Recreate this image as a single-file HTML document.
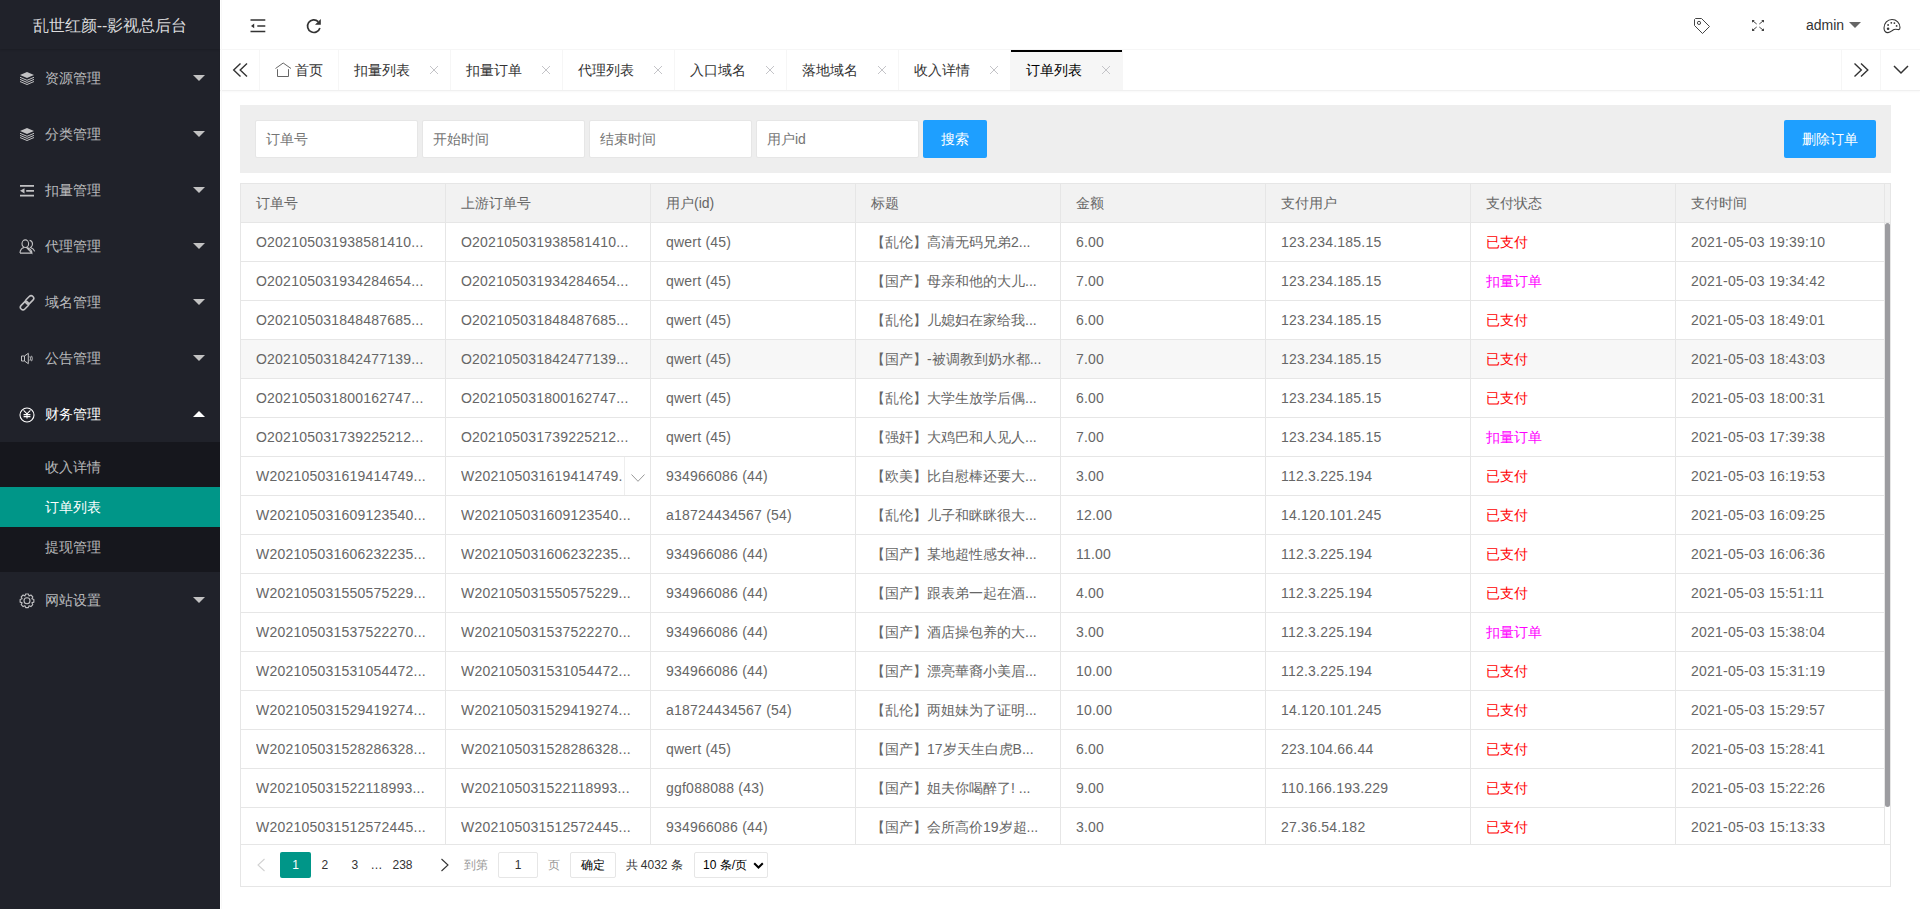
<!DOCTYPE html>
<html><head><meta charset="utf-8">
<style>
*{margin:0;padding:0;box-sizing:border-box}
html,body{width:1920px;height:909px;overflow:hidden;background:#fff}
body{font-family:"Liberation Sans",sans-serif;font-size:14px;color:#666;position:relative}
.side{position:absolute;left:0;top:0;width:220px;height:909px;background:#20222a}
.logo{position:absolute;left:0;top:0;width:220px;height:49px;line-height:52px;text-align:center;color:rgba(255,255,255,.85);font-size:16px;box-shadow:0 1px 2px 0 rgba(0,0,0,.15)}
.nav{position:absolute;left:0;top:50px;width:220px}
.item{position:relative;height:56px;line-height:56px;color:rgba(255,255,255,.7);padding-left:45px}
.item.on{color:#fff}
.item svg.ic{position:absolute;left:19px;top:20px}
.item .tri{position:absolute;right:15px;top:25px;width:0;height:0;border-left:6px solid transparent;border-right:6px solid transparent;border-top:6px solid #c2c2c2}
.item.on .tri{top:25px;border-top:0;border-bottom:6px solid #fff}
.child{background:rgba(0,0,0,.3);padding:5px 0}
.child div{height:40px;line-height:40px;padding-left:45px;color:rgba(255,255,255,.7)}
.child div.act{background:#009688;color:#fff}
.header{position:absolute;left:220px;top:0;right:0;height:50px;background:#fff;border-bottom:1px solid #f6f6f6}
.ab{position:absolute}
.tabs{position:absolute;left:220px;top:50px;right:0;height:41px;background:#fff;border-bottom:1px solid #f0f0f0;box-shadow:0 1px 2px 0 rgba(0,0,0,.03)}
.tabs .ctl{position:absolute;top:0;width:40px;height:40px;border-left:1px solid #f6f6f6;border-right:1px solid #f6f6f6}
.tabul{position:absolute;left:40px;top:0;height:40px;white-space:nowrap;font-size:0}
.tab{display:inline-block;position:relative;height:40px;line-height:40px;font-size:14px;color:#333;padding:0 40px 0 15px;border-right:1px solid #f6f6f6;vertical-align:top}
.tab .x{position:absolute;right:11px;top:15px}
.tab.act{background:#f6f6f6;color:#000}
.tab.act:after{content:"";position:absolute;left:0;top:0;width:100%;height:2px;background:#000}
.search{position:absolute;left:240px;top:105px;width:1651px;height:68px;background:#eee}
.inp{position:absolute;top:15px;width:163px;height:38px;background:#fff;border:1px solid #e6e6e6;border-radius:2px;line-height:36px;padding-left:10px;color:#757575}
.btn{position:absolute;height:38px;line-height:38px;background:#1e9fff;color:#fff;text-align:center;border-radius:2px}
.tbl{position:absolute;left:240px;top:183px;width:1651px;height:704px;border:1px solid #e6e6e6}
.tr{display:flex;height:39px;border-bottom:1px solid #e6e6e6;width:1644px}
.th{background:#f2f2f2}
.td{width:205px;flex:none;border-right:1px solid #e6e6e6;padding:0 15px;line-height:38px;white-space:nowrap;overflow:hidden;color:#666;letter-spacing:.22px}
.td:nth-child(4),.td:nth-child(7),.th .td{letter-spacing:0}
.td:nth-child(8){width:209px}

.cell{overflow:hidden;white-space:nowrap}
.tr.hov{background:#f7f7f7}
.red{color:red}.mag{color:#f0f}
.exp{position:relative}
.tips{position:absolute;right:0;top:0;width:26px;height:38px;border-left:1px solid #eee;background:#fff}
.tips svg{position:absolute;left:5px;top:16px}
.patch{position:absolute;left:1644px;top:0;width:5px;height:39px;background:#f2f2f2;border-bottom:1px solid #e6e6e6}
.thumb{position:absolute;left:1644px;top:39px;width:5px;height:584px;background:#9c9ca0;border-radius:3px}
.page{position:absolute;left:0;top:660px;width:1649px;height:42px;background:#fff;border-top:1px solid #e6e6e6}
.pg{position:absolute;top:852px;height:26px;line-height:26px;font-size:12px;color:#333;white-space:nowrap}
</style></head><body>
<div class="side">
 <div class="logo">乱世红颜--影视总后台</div>
 <div class="nav">
  <div class="item"><svg class="ic" width="16" height="16" viewBox="0 0 16 16"><path d="M1 5 L8 2 L15 5 L8 8 Z" fill="#c2c2c4"/><path d="M1 7.3 L8 10.3 L15 7.3 M1 9.4 L8 12.4 L15 9.4 M1 11.5 L8 14.5 L15 11.5" fill="none" stroke="#c2c2c4" stroke-width="1"/></svg>资源管理<i class="tri"></i></div>
  <div class="item"><svg class="ic" width="16" height="16" viewBox="0 0 16 16"><path d="M1 5 L8 2 L15 5 L8 8 Z" fill="#c2c2c4"/><path d="M1 7.3 L8 10.3 L15 7.3 M1 9.4 L8 12.4 L15 9.4 M1 11.5 L8 14.5 L15 11.5" fill="none" stroke="#c2c2c4" stroke-width="1"/></svg>分类管理<i class="tri"></i></div>
  <div class="item"><svg class="ic" width="16" height="16" viewBox="0 0 16 16"><path d="M1 3.9 H15 M7.2 8.8 H15 M1 13.7 H15" stroke="#c2c2c4" stroke-width="1.8" fill="none"/><path d="M1 8.8 L5.5 6.2 V11.4 Z" fill="#c2c2c4"/></svg>扣量管理<i class="tri"></i></div>
  <div class="item"><svg class="ic" width="17" height="17" viewBox="0 0 17 17"><ellipse cx="6.3" cy="5.7" rx="3.3" ry="3.8" fill="none" stroke="#c2c2c4" stroke-width="1.1"/><path d="M1 15.1 C1 11.8 3.2 9.7 5 9.6 M7.6 9.6 C9.6 9.7 12.9 11.8 12.9 15.1 Z M1 15.1 H12.9" fill="none" stroke="#c2c2c4" stroke-width="1.1"/><path d="M10.6 2.3 C12.4 2.8 13.5 4.3 13.5 6 C13.5 7.5 12.8 8.7 11.6 9.5 C13.6 10.3 15.2 11.8 15.7 13.3" fill="none" stroke="#c2c2c4" stroke-width="1.1"/></svg>代理管理<i class="tri"></i></div>
  <div class="item"><svg class="ic" width="17" height="17" viewBox="0 0 17 17"><rect x="-2.6" y="-4.7" width="5.2" height="9.4" rx="2.6" transform="translate(10.6 5.8) rotate(45)" fill="none" stroke="#c2c2c4" stroke-width="1.6"/><rect x="-2.6" y="-4.7" width="5.2" height="9.4" rx="2.6" transform="translate(5.5 11.7) rotate(45)" fill="none" stroke="#c2c2c4" stroke-width="1.6"/></svg>域名管理<i class="tri"></i></div>
  <div class="item"><svg class="ic" width="17" height="17" viewBox="0 0 17 17"><path d="M2.5 6 H5.5 L9.3 3.3 V13.7 L5.5 11 H2.5 Z M5.5 6 V11" fill="none" stroke="#c2c2c4" stroke-width="1"/><path d="M11 6.3 Q12 8.5 11 10.7 M12.6 5.8 Q14 8.5 12.6 11.2" fill="none" stroke="#c2c2c4" stroke-width="1"/></svg>公告管理<i class="tri"></i></div>
  <div class="item on"><svg class="ic" width="17" height="17" viewBox="0 0 17 17"><circle cx="8" cy="9" r="7" fill="none" stroke="#fff" stroke-width="1.1"/><path d="M4.6 4.3 L8 7.8 L11.4 4.3 M4.6 8.6 H11.4 M4.6 10.6 H11.4 M8 7.8 V12.6" fill="none" stroke="#fff" stroke-width="1.1"/></svg>财务管理<i class="tri"></i></div>
  <div class="child">
   <div>收入详情</div>
   <div class="act">订单列表</div>
   <div>提现管理</div>
  </div>
  <div class="item"><svg class="ic" width="17" height="17" viewBox="0 0 17 17"><path d="M5.98 3.90 L6.66 1.93 L9.34 1.93 L10.02 3.90 L10.04 3.91 L11.91 3.00 L13.80 4.89 L12.89 6.76 L12.90 6.78 L14.87 7.46 L14.87 10.14 L12.90 10.82 L12.89 10.84 L13.80 12.71 L11.91 14.60 L10.04 13.69 L10.02 13.70 L9.34 15.67 L6.66 15.67 L5.98 13.70 L5.96 13.69 L4.09 14.60 L2.20 12.71 L3.11 10.84 L3.10 10.82 L1.13 10.14 L1.13 7.46 L3.10 6.78 L3.11 6.76 L2.20 4.89 L4.09 3.00 L5.96 3.91 Z" fill="none" stroke="#c2c2c4" stroke-width="1.1" stroke-linejoin="round"/><circle cx="8" cy="8.8" r="3" fill="none" stroke="#c2c2c4" stroke-width="1.1"/></svg>网站设置<i class="tri"></i></div>
 </div>
</div>

<div class="header"></div>
<div class="ab" style="left:221px;top:0;width:1px;height:909px;background:#f8f8f8;z-index:5"></div>
<svg class="ab" style="left:250px;top:18px" width="16" height="16" viewBox="0 0 16 16"><path d="M0.5 2.1 H15.3 M7.3 7.9 H15.3 M0.5 13.6 H15.3" stroke="#333" stroke-width="1.5" fill="none"/><path d="M1 7.9 L4.2 5.6 V10.2 Z" fill="#333"/></svg>
<svg class="ab" style="left:305px;top:17px" width="18" height="18" viewBox="0 0 18 18"><path d="M13.2 4.6 A6.3 6.3 0 1 0 14.9 10.9" fill="none" stroke="#333" stroke-width="1.7"/><path d="M15.8 2 V7.8 H10 Z" fill="#333"/></svg>
<svg class="ab" style="left:1690px;top:15px" width="22" height="22" viewBox="0 0 22 22"><path d="M5.5 3.5 H11.5 L19.5 11.5 L12.5 18.5 L4.5 10.5 V4.5 Z" fill="none" stroke="#444" stroke-width="1" stroke-linejoin="round"/><circle cx="9" cy="7.9" r="1.6" fill="none" stroke="#444" stroke-width="1"/></svg>
<svg class="ab" style="left:1750px;top:18px" width="16" height="16" viewBox="0 0 16 16"><path d="M2 2 H4.8 L2 4.8 Z M14 2 V4.8 L11.2 2 Z M2 13 V10.2 L4.8 13 Z M14 13 H11.2 L14 10.2 Z" fill="#444"/><path d="M3 3 L6.7 6 M13 3 L9.3 6 M3 12 L6.7 9 M13 12 L9.3 9" stroke="#444" stroke-width="1" fill="none"/></svg>
<div class="ab" style="left:1806px;top:0;line-height:50px;color:#333;font-size:14px">admin</div>
<i class="ab" style="left:1849px;top:22px;width:0;height:0;border-left:6px solid transparent;border-right:6px solid transparent;border-top:6px solid #666"></i>
<svg class="ab" style="left:1882px;top:17px" width="20" height="18" viewBox="0 0 20 18"><path d="M6 15.6 C3.5 15.8 2 13.5 2 11 C2 6 5.5 2.5 10 2.5 C14.5 2.5 18 6 18 10.5 C18 12 17.5 12.6 16.5 12.6 C14 12.2 12.5 11.8 11 13 C9 14.5 8.5 15.5 6 15.6 Z" fill="none" stroke="#333" stroke-width="1.1"/><circle cx="6.1" cy="8" r="0.9" fill="#333"/><circle cx="9.3" cy="5.8" r="0.9" fill="#333"/><circle cx="12.4" cy="6.1" r="0.9" fill="#333"/><circle cx="14.6" cy="8.9" r="0.9" fill="#333"/><circle cx="6.1" cy="11.75" r="1.3" fill="#333"/></svg>

<div class="tabs">
 <div class="ctl" style="left:0;border-left:0"><svg style="position:absolute;left:0;top:0" width="40" height="40" viewBox="0 0 40 40"><path d="M20.5 13.5 L13.7 20 L20.5 26.5 M27 13.5 L20.2 20 L27 26.5" fill="none" stroke="#333" stroke-width="1.4"/></svg></div>
 <div class="tabul">
  <div class="tab" style="width:79px;padding:0 0 0 35px"><svg style="position:absolute;left:15px;top:12px" width="17" height="16" viewBox="0 0 17 16"><path d="M0.5 6.5 L8.2 1 L16 6.5 M2.5 7.2 V14.5 H13.5 V7.2" fill="none" stroke="#666" stroke-width="1"/></svg>首页</div><div class="tab">扣量列表<svg class="x" width="10" height="10" viewBox="0 0 10 10"><path d="M1 1 L9 9 M9 1 L1 9" stroke="#c4c4c8" stroke-width="1"/></svg></div><div class="tab">扣量订单<svg class="x" width="10" height="10" viewBox="0 0 10 10"><path d="M1 1 L9 9 M9 1 L1 9" stroke="#c4c4c8" stroke-width="1"/></svg></div><div class="tab">代理列表<svg class="x" width="10" height="10" viewBox="0 0 10 10"><path d="M1 1 L9 9 M9 1 L1 9" stroke="#c4c4c8" stroke-width="1"/></svg></div><div class="tab">入口域名<svg class="x" width="10" height="10" viewBox="0 0 10 10"><path d="M1 1 L9 9 M9 1 L1 9" stroke="#c4c4c8" stroke-width="1"/></svg></div><div class="tab">落地域名<svg class="x" width="10" height="10" viewBox="0 0 10 10"><path d="M1 1 L9 9 M9 1 L1 9" stroke="#c4c4c8" stroke-width="1"/></svg></div><div class="tab">收入详情<svg class="x" width="10" height="10" viewBox="0 0 10 10"><path d="M1 1 L9 9 M9 1 L1 9" stroke="#c4c4c8" stroke-width="1"/></svg></div><div class="tab act">订单列表<svg class="x" width="10" height="10" viewBox="0 0 10 10"><path d="M1 1 L9 9 M9 1 L1 9" stroke="#c4c4c8" stroke-width="1"/></svg></div>
 </div>
 <div class="ctl" style="left:1621px"><svg style="position:absolute;left:0;top:0" width="40" height="40" viewBox="0 0 40 40"><path d="M12.5 13.5 L19.3 20 L12.5 26.5 M19 13.5 L25.8 20 L19 26.5" fill="none" stroke="#333" stroke-width="1.4"/></svg></div>
 <div class="ctl" style="left:1660px;border-right:0"><svg style="position:absolute;left:12px;top:15px" width="16" height="10" viewBox="0 0 16 10"><path d="M1 1 L8 8 L15 1" fill="none" stroke="#333" stroke-width="1.5"/></svg></div>
</div>

<div class="search">
 <div class="inp" style="left:15px">订单号</div>
 <div class="inp" style="left:182px">开始时间</div>
 <div class="inp" style="left:349px">结束时间</div>
 <div class="inp" style="left:516px">用户id</div>
 <div class="btn" style="left:683px;top:15px;width:64px">搜索</div>
 <div class="btn" style="left:1544px;top:15px;width:92px">删除订单</div>
</div>
<div class="tbl">
<div class="tr th"><div class="td">订单号</div><div class="td">上游订单号</div><div class="td">用户(id)</div><div class="td">标题</div><div class="td">金额</div><div class="td">支付用户</div><div class="td">支付状态</div><div class="td">支付时间</div></div>
<div class="patch"></div>
<div class="tr"><div class="td"><div class="cell">O202105031938581410...</div></div><div class="td"><div class="cell">O202105031938581410...</div></div><div class="td"><div class="cell">qwert (45)</div></div><div class="td"><div class="cell">【乱伦】高清无码兄弟2...</div></div><div class="td"><div class="cell">6.00</div></div><div class="td"><div class="cell">123.234.185.15</div></div><div class="td"><span class="red">已支付</span></div><div class="td"><div class="cell">2021-05-03 19:39:10</div></div></div>
<div class="tr"><div class="td"><div class="cell">O202105031934284654...</div></div><div class="td"><div class="cell">O202105031934284654...</div></div><div class="td"><div class="cell">qwert (45)</div></div><div class="td"><div class="cell">【国产】母亲和他的大儿...</div></div><div class="td"><div class="cell">7.00</div></div><div class="td"><div class="cell">123.234.185.15</div></div><div class="td"><span class="mag">扣量订单</span></div><div class="td"><div class="cell">2021-05-03 19:34:42</div></div></div>
<div class="tr"><div class="td"><div class="cell">O202105031848487685...</div></div><div class="td"><div class="cell">O202105031848487685...</div></div><div class="td"><div class="cell">qwert (45)</div></div><div class="td"><div class="cell">【乱伦】儿媳妇在家给我...</div></div><div class="td"><div class="cell">6.00</div></div><div class="td"><div class="cell">123.234.185.15</div></div><div class="td"><span class="red">已支付</span></div><div class="td"><div class="cell">2021-05-03 18:49:01</div></div></div>
<div class="tr hov"><div class="td"><div class="cell">O202105031842477139...</div></div><div class="td"><div class="cell">O202105031842477139...</div></div><div class="td"><div class="cell">qwert (45)</div></div><div class="td"><div class="cell">【国产】-被调教到奶水都...</div></div><div class="td"><div class="cell">7.00</div></div><div class="td"><div class="cell">123.234.185.15</div></div><div class="td"><span class="red">已支付</span></div><div class="td"><div class="cell">2021-05-03 18:43:03</div></div></div>
<div class="tr"><div class="td"><div class="cell">O202105031800162747...</div></div><div class="td"><div class="cell">O202105031800162747...</div></div><div class="td"><div class="cell">qwert (45)</div></div><div class="td"><div class="cell">【乱伦】大学生放学后偶...</div></div><div class="td"><div class="cell">6.00</div></div><div class="td"><div class="cell">123.234.185.15</div></div><div class="td"><span class="red">已支付</span></div><div class="td"><div class="cell">2021-05-03 18:00:31</div></div></div>
<div class="tr"><div class="td"><div class="cell">O202105031739225212...</div></div><div class="td"><div class="cell">O202105031739225212...</div></div><div class="td"><div class="cell">qwert (45)</div></div><div class="td"><div class="cell">【强奸】大鸡巴和人见人...</div></div><div class="td"><div class="cell">7.00</div></div><div class="td"><div class="cell">123.234.185.15</div></div><div class="td"><span class="mag">扣量订单</span></div><div class="td"><div class="cell">2021-05-03 17:39:38</div></div></div>
<div class="tr"><div class="td"><div class="cell">W202105031619414749...</div></div><div class="td exp"><div class="cell">W202105031619414749.</div><i class="tips"><svg width="16" height="10" viewBox="0 0 16 10"><path d="M1.5 1.5 L8 8.3 L14.5 1.5" fill="none" stroke="#999" stroke-width="1"/></svg></i></div><div class="td"><div class="cell">934966086 (44)</div></div><div class="td"><div class="cell">【欧美】比自慰棒还要大...</div></div><div class="td"><div class="cell">3.00</div></div><div class="td"><div class="cell">112.3.225.194</div></div><div class="td"><span class="red">已支付</span></div><div class="td"><div class="cell">2021-05-03 16:19:53</div></div></div>
<div class="tr"><div class="td"><div class="cell">W202105031609123540...</div></div><div class="td"><div class="cell">W202105031609123540...</div></div><div class="td"><div class="cell">a18724434567 (54)</div></div><div class="td"><div class="cell">【乱伦】儿子和眯眯很大...</div></div><div class="td"><div class="cell">12.00</div></div><div class="td"><div class="cell">14.120.101.245</div></div><div class="td"><span class="red">已支付</span></div><div class="td"><div class="cell">2021-05-03 16:09:25</div></div></div>
<div class="tr"><div class="td"><div class="cell">W202105031606232235...</div></div><div class="td"><div class="cell">W202105031606232235...</div></div><div class="td"><div class="cell">934966086 (44)</div></div><div class="td"><div class="cell">【国产】某地超性感女神...</div></div><div class="td"><div class="cell">11.00</div></div><div class="td"><div class="cell">112.3.225.194</div></div><div class="td"><span class="red">已支付</span></div><div class="td"><div class="cell">2021-05-03 16:06:36</div></div></div>
<div class="tr"><div class="td"><div class="cell">W202105031550575229...</div></div><div class="td"><div class="cell">W202105031550575229...</div></div><div class="td"><div class="cell">934966086 (44)</div></div><div class="td"><div class="cell">【国产】跟表弟一起在酒...</div></div><div class="td"><div class="cell">4.00</div></div><div class="td"><div class="cell">112.3.225.194</div></div><div class="td"><span class="red">已支付</span></div><div class="td"><div class="cell">2021-05-03 15:51:11</div></div></div>
<div class="tr"><div class="td"><div class="cell">W202105031537522270...</div></div><div class="td"><div class="cell">W202105031537522270...</div></div><div class="td"><div class="cell">934966086 (44)</div></div><div class="td"><div class="cell">【国产】酒店操包养的大...</div></div><div class="td"><div class="cell">3.00</div></div><div class="td"><div class="cell">112.3.225.194</div></div><div class="td"><span class="mag">扣量订单</span></div><div class="td"><div class="cell">2021-05-03 15:38:04</div></div></div>
<div class="tr"><div class="td"><div class="cell">W202105031531054472...</div></div><div class="td"><div class="cell">W202105031531054472...</div></div><div class="td"><div class="cell">934966086 (44)</div></div><div class="td"><div class="cell">【国产】漂亮華裔小美眉...</div></div><div class="td"><div class="cell">10.00</div></div><div class="td"><div class="cell">112.3.225.194</div></div><div class="td"><span class="red">已支付</span></div><div class="td"><div class="cell">2021-05-03 15:31:19</div></div></div>
<div class="tr"><div class="td"><div class="cell">W202105031529419274...</div></div><div class="td"><div class="cell">W202105031529419274...</div></div><div class="td"><div class="cell">a18724434567 (54)</div></div><div class="td"><div class="cell">【乱伦】两姐妹为了证明...</div></div><div class="td"><div class="cell">10.00</div></div><div class="td"><div class="cell">14.120.101.245</div></div><div class="td"><span class="red">已支付</span></div><div class="td"><div class="cell">2021-05-03 15:29:57</div></div></div>
<div class="tr"><div class="td"><div class="cell">W202105031528286328...</div></div><div class="td"><div class="cell">W202105031528286328...</div></div><div class="td"><div class="cell">qwert (45)</div></div><div class="td"><div class="cell">【国产】17岁天生白虎B...</div></div><div class="td"><div class="cell">6.00</div></div><div class="td"><div class="cell">223.104.66.44</div></div><div class="td"><span class="red">已支付</span></div><div class="td"><div class="cell">2021-05-03 15:28:41</div></div></div>
<div class="tr"><div class="td"><div class="cell">W202105031522118993...</div></div><div class="td"><div class="cell">W202105031522118993...</div></div><div class="td"><div class="cell">ggf088088 (43)</div></div><div class="td"><div class="cell">【国产】姐夫你喝醉了! ...</div></div><div class="td"><div class="cell">9.00</div></div><div class="td"><div class="cell">110.166.193.229</div></div><div class="td"><span class="red">已支付</span></div><div class="td"><div class="cell">2021-05-03 15:22:26</div></div></div>
<div class="tr"><div class="td"><div class="cell">W202105031512572445...</div></div><div class="td"><div class="cell">W202105031512572445...</div></div><div class="td"><div class="cell">934966086 (44)</div></div><div class="td"><div class="cell">【国产】会所高价19岁超...</div></div><div class="td"><div class="cell">3.00</div></div><div class="td"><div class="cell">27.36.54.182</div></div><div class="td"><span class="red">已支付</span></div><div class="td"><div class="cell">2021-05-03 15:13:33</div></div></div><div class="thumb"></div>
<div class="page"></div>
</div>
<svg class="ab" style="left:255px;top:857px" width="12" height="16" viewBox="0 0 12 16"><path d="M9.5 2 L3 8 L9.5 14" fill="none" stroke="#d2d2d2" stroke-width="1.1"/></svg>
<div class="pg" style="left:280px;width:31px;background:#009688;color:#fff;text-align:center;border-radius:2px">1</div>
<div class="pg" style="left:321.5px">2</div>
<div class="pg" style="left:351.5px">3</div>
<div class="pg" style="left:370.5px;color:#333">…</div>
<div class="pg" style="left:392.5px">238</div>
<svg class="ab" style="left:439px;top:857px" width="12" height="16" viewBox="0 0 12 16"><path d="M2.5 2 L9 8 L2.5 14" fill="none" stroke="#333" stroke-width="1.1"/></svg>
<div class="pg" style="left:464px;color:#999">到第</div>
<div class="pg" style="left:498px;width:40px;border:1px solid #e6e6e6;text-align:center;line-height:24px;border-radius:2px">1</div>
<div class="pg" style="left:548px;color:#999">页</div>
<div class="pg" style="left:570px;width:46px;border:1px solid #e6e6e6;text-align:center;line-height:24px;color:#000;border-radius:2px">确定</div>
<div class="pg" style="left:625.5px">共 4032 条</div>
<div class="pg" style="left:694px;width:74px;border:1px solid #e6e6e6;line-height:24px;padding-left:8px;color:#000;border-radius:2px;font-size:12px">10 条/页<svg style="position:absolute;left:58px;top:9px" width="11" height="8" viewBox="0 0 11 8"><path d="M1.2 1.2 L5.5 5.5 L9.8 1.2" fill="none" stroke="#000" stroke-width="2"/></svg></div>
</body></html>
